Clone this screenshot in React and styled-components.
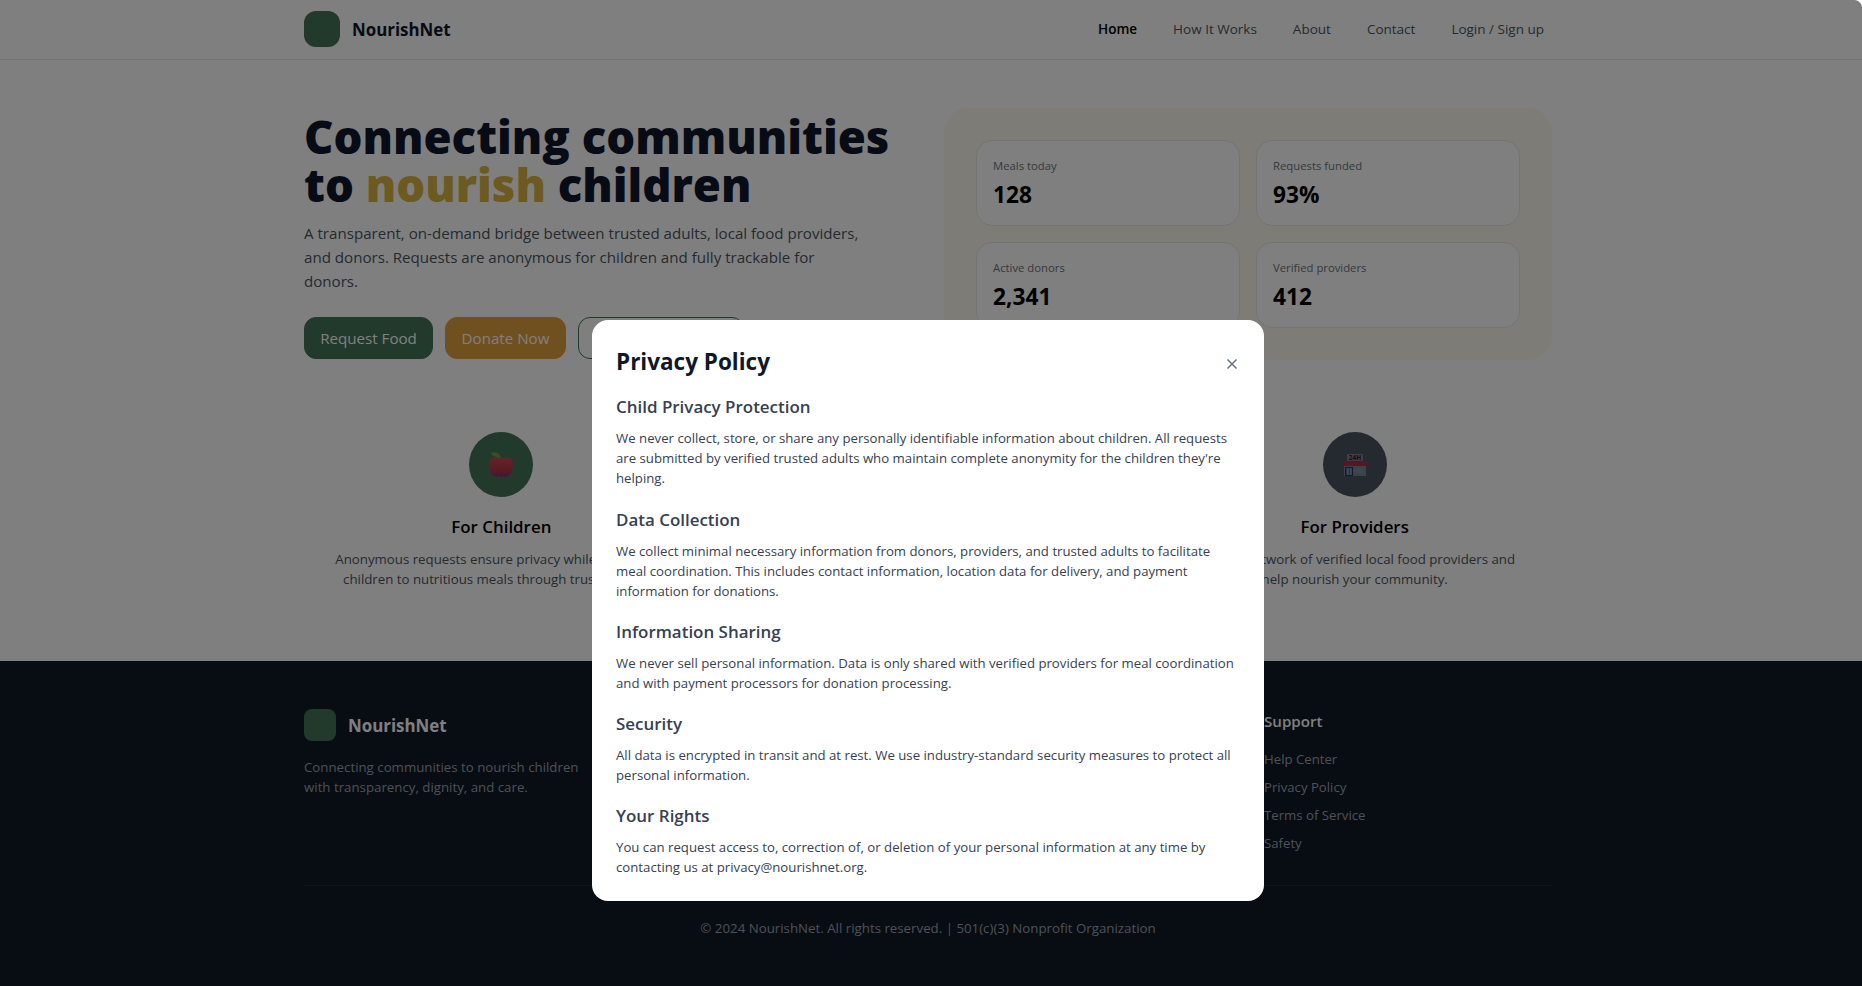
import React from "react";
import styled, { createGlobalStyle, css } from "styled-components";

const Global = createGlobalStyle`
  * { box-sizing: border-box; margin: 0; padding: 0; }
  body { background: #fff; font-family: "Open Sans", "Noto Sans", sans-serif; color: #000; overflow: hidden; }
  a { color: inherit; text-decoration: none; }
  button { font: inherit; border: 0; background: none; letter-spacing: inherit; }
`;
const Page = styled.div`width: 1862px; height: 986px; position: relative; overflow: hidden; background: #fff;`;
const Site = styled.div`width: 1856px;`;
const Container = styled.div`width: 1280px; margin: 0 auto; padding: 0 16px;`;
const Header = styled.header`width: 1862px; height: 60px; border-bottom: 1px solid #e5e7eb;`;
const HeaderWrap = styled(Container)`margin-left: 288px; height: 58px; display: flex; align-items: center; justify-content: space-between;`;
const Brand = styled.div`display: flex; align-items: center; gap: 12px;`;
const Mark = styled.span`width: ${p => p.$s}px; height: ${p => p.$s}px; border-radius: ${p => p.$r}px; background: #427459;`;
const BrandName = styled.span`font-size: 16.9px; font-weight: 700; line-height: 28px; padding-top: 1px; color: ${p => p.$c};`;
const Nav = styled.nav`display: flex; gap: 36px; padding-right: 8px; font-size: 13.5px; line-height: 20px; color: #4b5563;`;
const NavLink = styled.a`${p => p.$active && css`color: #000; font-weight: 600;`}`;
const Hero = styled(Container)`padding-top: 48px; display: grid; grid-template-columns: 608px 608px; gap: 32px;`;
const Title = styled.h1`font-size: 45.5px; font-weight: 800; line-height: 48px; color: #0f172a; padding-top: 4px; white-space: nowrap; span { color: #d9b440; }`;
const Lead = styled.p`margin-top: 13px; font-size: 15.12px; line-height: 24px; color: #4b5563; white-space: nowrap;`;
const Actions = styled.div`display: flex; gap: 12px; margin-top: 24px;`;
const Button = styled.button`height: 42px; width: ${p => p.$w}px; border-radius: 12px; font-size: 15.15px; color: ${p => p.$fg || "#fff"}; background: ${p => p.$bg || "transparent"}; border: 1px solid ${p => p.$line || p.$bg};`;
const Stats = styled.div`height: 252px; border-radius: 24px; padding: 32px; background: #fdf9ef; display: grid; grid-template-columns: 1fr 1fr; grid-template-rows: 86px 86px; gap: 16px;`;
const Stat = styled.div`border: 1px solid #e5e7eb; border-radius: 16px; background: #fff; padding: 16px;`;
const StatLabel = styled.div`font-size: 11.3px; line-height: 16px; padding-top: 1px; color: #6b7280;`;
const StatValue = styled.div`font-size: 22.7px; line-height: 32px; margin-top: 5px; font-weight: 700;`;
const Features = styled(Container)`display: grid; grid-template-columns: repeat(3, 1fr); gap: 32px; padding-top: 48px;`;
const Feature = styled.div`padding: 24px; text-align: center; height: 253px;`;
const Circle = styled.div`width: 64px; height: 65px; margin: 0 auto 16px; border-radius: 50%; display: grid; place-items: center; background: ${p => p.$bg};`;
const FeatureTitle = styled.h3`font-size: 16.9px; line-height: 28px; font-weight: 600; margin-bottom: 8px;`;
const FeatureText = styled.p`font-size: 13.25px; line-height: 20px; color: #4b5563; white-space: nowrap;`;
const Footer = styled.footer`width: 1862px; height: 325px; background: #111827;`;
const FooterWrap = styled(Container)`margin-left: 288px; padding-top: 48px;`;
const Columns = styled.div`display: grid; grid-template-columns: repeat(4, 288px); gap: 32px; height: 177px; border-bottom: 1px solid #1f2937;`;
const FooterText = styled.p`margin-top: 16px; font-size: 13.27px; line-height: 20px; color: #9ca3af; white-space: nowrap;`;
const FooterHead = styled.h4`font-size: 15.1px; line-height: 24px; font-weight: 600; color: #fff; margin-bottom: 16px;`;
const Links = styled.div`display: flex; flex-direction: column; gap: 8px; font-size: 13.2px; line-height: 20px; color: #9ca3af;`;
const Copyright = styled.p`margin-top: 32px; text-align: center; font-size: 13.29px; line-height: 20px; color: #9ca3af;`;
const Overlay = styled.div`position: absolute; inset: 0; background: rgba(0,0,0,.5);`;
const Corner = styled.div`position: absolute; top: 0; right: 0; width: 8px; height: 8px; background: radial-gradient(circle at 0 100%, transparent 7.5px, #fff 8.5px);`;
const Modal = styled.section`position: absolute; left: 592px; top: 320px; width: 672px; height: 581px; border-radius: 16px; background: #fff; padding: 24px;`;
const ModalHead = styled.div`display: flex; justify-content: space-between; align-items: center; height: 36px; margin-bottom: 12px;`;
const ModalTitle = styled.h2`font-size: 22.5px; line-height: 32px; font-weight: 700; color: #0f172a;`;
const Close = styled.button`width: 16px; height: 16px; display: grid; place-items: center; margin-top: 4px;`;
const Section = styled.div`margin-bottom: 16px; color: #374151; &:nth-of-type(2) { margin-bottom: 17px; }`;
const SectionTitle = styled.h3`font-size: 16.95px; line-height: 28px; font-weight: 600; padding-top: 1px; margin-bottom: 7px;`;
const SectionText = styled.p`font-size: 13.21px; line-height: 20px; white-space: nowrap;`;

const lines = (a) => a.map((t, i) => <React.Fragment key={i}>{i > 0 && <br />}{t}</React.Fragment>);
const stats = [["Meals today", "128"], ["Requests funded", "93%"], ["Active donors", "2,341"], ["Verified providers", "412"]];
const policy = [
  ["Child Privacy Protection", ["We never collect, store, or share any personally identifiable information about children. All requests", "are submitted by verified trusted adults who maintain complete anonymity for the children they're", "helping."]],
  ["Data Collection", ["We collect minimal necessary information from donors, providers, and trusted adults to facilitate", "meal coordination. This includes contact information, location data for delivery, and payment", "information for donations."]],
  ["Information Sharing", ["We never sell personal information. Data is only shared with verified providers for meal coordination", "and with payment processors for donation processing."]],
  ["Security", ["All data is encrypted in transit and at rest. We use industry-standard security measures to protect all", "personal information."]],
  ["Your Rights", ["You can request access to, correction of, or deletion of your personal information at any time by", "contacting us at privacy@nourishnet.org."]],
];
const Apple = () => <svg width="24" height="26" viewBox="0 0 24 26">
  <defs><linearGradient id="ap" x2="0" y2="1"><stop stopColor="#c8484e" /><stop offset=".6" stopColor="#b83848" /><stop offset="1" stopColor="#852a70" /></linearGradient></defs>
  <path d="M12 6.500c4-2 12-2 12 6 0 6-3 12-7 12-1.500 0-1.500-.6-2.500-.6s-1.500 1-2.500 1-1.500-1-2.500-1-1 .6-2.500.6c-4 0-7-6-7-12 0-8 8-8 12-6z" fill="url(#ap)" />
  <path d="M12 6C8 6 3.500 4.500 2 1c5-2 9 0 10 5z" fill="#7a9a3c" /></svg>;
const Store = () => <svg width="24" height="24" viewBox="0 0 24 24">
  <rect x="4" y="1" width="16" height="7" rx="1" fill="#8a7a8c" /><text x="12" y="7" textAnchor="middle" fontSize="6.500" fontWeight="700" fill="#2a1830">24H</text>
  <rect x="1" y="12" width="22" height="11" fill="#887c8c" /><rect y="9" width="24" height="4" fill="#a83048" />
  <rect x="2" y="14" width="8" height="9" fill="#283650" /><path d="M3.500 15h2.300v7H3.500zM6.500 15h2.300v7H6.500z" fill="#689ebc" /><rect x="12" y="16" width="8" height="4" fill="#589caa" /></svg>;

export default function App() {
  return <Page><Global />
    <Site>
      <Header><HeaderWrap>
        <Brand><Mark $s={36} $r={12} /><BrandName $c="#0f172a">NourishNet</BrandName></Brand>
        <Nav><NavLink $active>Home</NavLink><NavLink>How It Works</NavLink><NavLink>About</NavLink><NavLink>Contact</NavLink><NavLink>Login / Sign up</NavLink></Nav>
      </HeaderWrap></Header>
      <Hero>
        <div>
          <Title>Connecting communities<br />to <span>nourish</span> children</Title>
          <Lead>{lines(["A transparent, on-demand bridge between trusted adults, local food providers,", "and donors. Requests are anonymous for children and fully trackable for", "donors."])}</Lead>
          <Actions><Button $w={129} $bg="#427459">Request Food</Button><Button $w={121} $bg="#e0a03e">Donate Now</Button><Button $w={166} $line="#427459" $fg="#427459" /></Actions>
        </div>
        <Stats>{stats.map(([l, v]) => <Stat key={l}><StatLabel>{l}</StatLabel><StatValue>{v}</StatValue></Stat>)}</Stats>
      </Hero>
      <Features>
        <Feature><Circle $bg="#427459"><Apple /></Circle><FeatureTitle>For Children</FeatureTitle><FeatureText>{lines(["Anonymous requests ensure privacy while connecting", "children to nutritious meals through trusted adults."])}</FeatureText></Feature>
        <Feature />
        <Feature><Circle $bg="#4b5563"><Store /></Circle><FeatureTitle>For Providers</FeatureTitle><FeatureText>{lines(["Join our network of verified local food providers and", "help nourish your community."])}</FeatureText></Feature>
      </Features>
      <Footer><FooterWrap>
        <Columns>
          <div><Brand><Mark $s={32} $r={8} /><BrandName $c="#fff">NourishNet</BrandName></Brand><FooterText>{lines(["Connecting communities to nourish children", "with transparency, dignity, and care."])}</FooterText></div>
          <div /><div />
          <div><FooterHead>Support</FooterHead><Links><a>Help Center</a><a>Privacy Policy</a><a>Terms of Service</a><a>Safety</a></Links></div>
        </Columns>
        <Copyright>© 2024 NourishNet. All rights reserved. | 501(c)(3) Nonprofit Organization</Copyright>
      </FooterWrap></Footer>
    </Site>
    <Overlay />
    <Corner />
    <Modal>
      <ModalHead><ModalTitle>Privacy Policy</ModalTitle><Close><svg width="12" height="12" viewBox="0 0 12 12"><path d="M1.500 1.500l9 9M10.500 1.500l-9 9" stroke="#6b7280" strokeWidth="1.500" /></svg></Close></ModalHead>
      {policy.map(([t, b]) => <Section key={t}><SectionTitle>{t}</SectionTitle><SectionText>{lines(b)}</SectionText></Section>)}
    </Modal>
  </Page>;
}
